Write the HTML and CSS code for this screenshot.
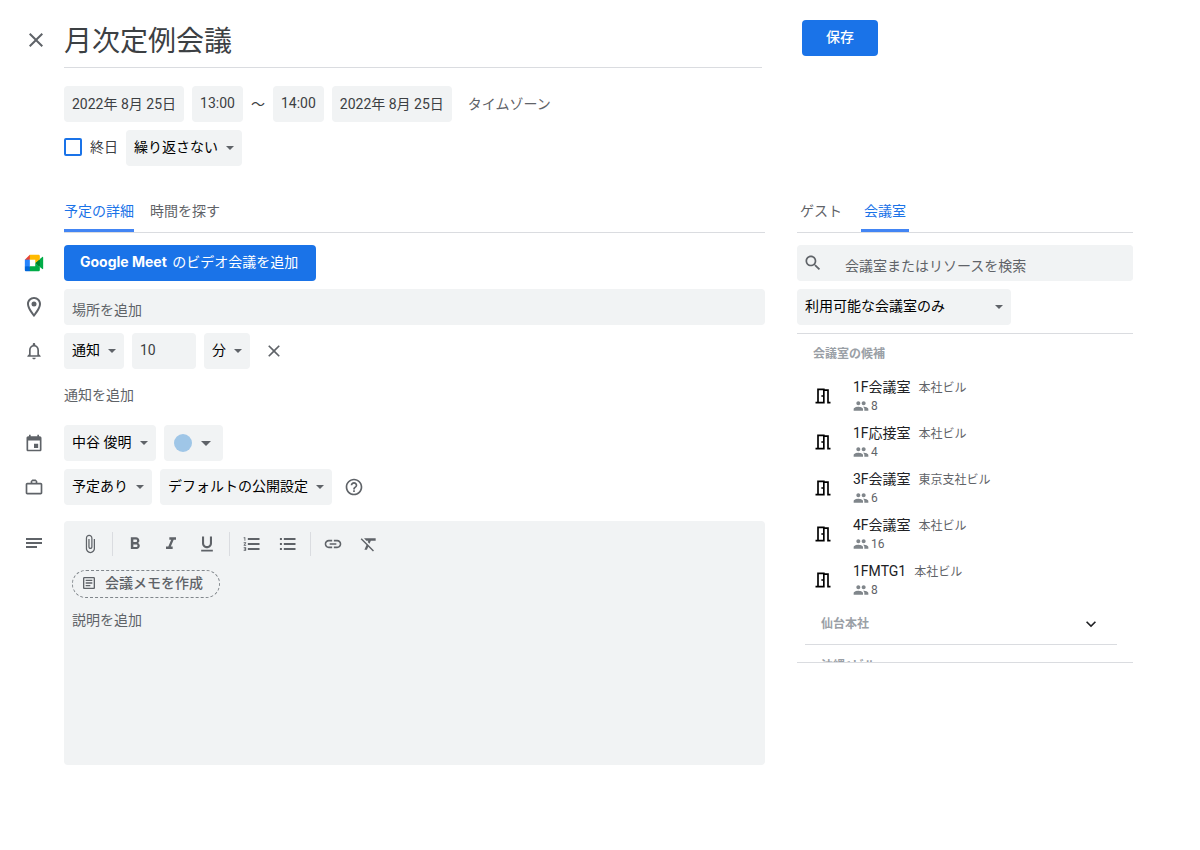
FILE: index.html
```html
<!DOCTYPE html>
<html lang="ja">
<head>
<meta charset="utf-8">
<meta name="viewport" content="width=device-width, initial-scale=1">
<title>月次定例会議</title>
<link rel="stylesheet" href="styles.css">
</head>
<body>
<svg class="sprite" aria-hidden="true">
  <symbol id="close" viewBox="0 0 24 24"><path d="M19 6.41 17.59 5 12 10.59 6.41 5 5 6.41 10.59 12 5 17.59 6.41 19 12 13.41 17.59 19 19 17.59 13.41 12z"/></symbol>
  <symbol id="door" viewBox="0 0 24 24"><path d="M14 6v15H3v-2h2V3h9v1h5v15h2v2h-4V6h-3zm-2-1H7v14h5V5zm-2 6h2v2h-2v-2z"/></symbol>
  <symbol id="people" viewBox="0 0 24 24"><path d="M16 11c1.66 0 2.99-1.34 2.99-3S17.66 5 16 5s-3 1.34-3 3 1.34 3 3 3zm-8 0c1.66 0 2.99-1.34 2.99-3S9.66 5 8 5 5 6.34 5 8s1.34 3 3 3zm0 2c-2.33 0-7 1.17-7 3.5V19h14v-2.500c0-2.330-4.670-3.500-7-3.500zm8 0c-.29 0-.62.02-.97.05 1.160.84 1.970 1.970 1.970 3.450V19h6v-2.500c0-2.330-4.670-3.500-7-3.500z"/></symbol>
</svg>
<form class="page">
  <header class="title-row">
    <button class="icon-button gutter" type="button" aria-label="閉じる"><svg class="icon"><use href="#close"/></svg></button>
    <input class="title" type="text" value="月次定例会議" aria-label="タイトル">
  </header>
  <div class="save-area"><button class="primary save" type="submit">保存</button></div>

  <section class="schedule">
    <div class="line">
      <input class="field fit" type="text" value="2022年 8月 25日" size="11" aria-label="開始日">
      <input class="field fit" type="text" value="13:00" size="4" aria-label="開始時刻">
      <span class="dash">～</span>
      <input class="field fit" type="text" value="14:00" size="4" aria-label="終了時刻">
      <input class="field fit" type="text" value="2022年 8月 25日" size="11" aria-label="終了日">
      <button class="text-button zone" type="button">タイムゾーン</button>
    </div>
    <div class="line">
      <label class="all-day"><input class="check" type="checkbox"> 終日</label>
      <span class="drop"><select class="field" aria-label="繰り返し"><option>繰り返さない</option></select></span>
    </div>
  </section>

  <main class="details">
    <div class="tabs" role="tablist">
      <button class="tab selected" type="button" role="tab" aria-selected="true">予定の詳細</button>
      <button class="tab" type="button" role="tab" aria-selected="false">時間を探す</button>
    </div>
    <div class="row">
      <span class="gutter"><svg class="icon" viewBox="0 0 24 24"><path fill="#00832d" d="M13.500 12 15.900 14.700 19 16.700 19.600 12 19 7.400 15.800 9.100z"/><path fill="#0066da" d="M1 16v4.400C1 21.300 1.700 22 2.600 22H7l.9-3L7 16l-3-.9z"/><path fill="#e94235" d="M7 2 1 8l3 .9L7 8l.9-3z"/><path fill="#2684fc" d="M1 8h6v8H1z"/><path fill="#00ac47" d="M22 4.800 19 7.300v9.400l3 2.500c.5.400 1 .1 1-.5V5.300c0-.6-.6-.9-1-.5zM13.500 12v4H7v6h10.400c.9 0 1.600-.7 1.600-1.600v-3.700z"/><path fill="#ffba00" d="M17.400 2H7v6h6.500v4L19 7.400V3.600C19 2.700 18.300 2 17.400 2z"/></svg></span>
      <button class="primary meet" type="button"><span class="brand">Google Meet</span> のビデオ会議を追加</button>
    </div>
    <div class="row">
      <span class="gutter"><svg class="icon large" viewBox="0 0 24 24"><path d="M12 2C8.130 2 5 5.130 5 9c0 5.250 7 13 7 13s7-7.750 7-13c0-3.870-3.130-7-7-7zM7 9c0-2.760 2.240-5 5-5s5 2.240 5 5c0 2.880-2.880 7.190-5 9.880C9.920 16.210 7 11.850 7 9z"/><circle cx="12" cy="9" r="2.500"/></svg></span>
      <input class="field grow lowered" type="text" placeholder="場所を追加" aria-label="場所">
    </div>
    <div class="row">
      <span class="gutter"><svg class="icon" viewBox="0 0 24 24"><path d="M12 22c1.100 0 2-.9 2-2h-4c0 1.100.9 2 2 2zm6-6v-5c0-3.070-1.630-5.640-4.500-6.320V4c0-.83-.67-1.500-1.500-1.500s-1.500.67-1.500 1.500v.68C7.640 5.360 6 7.920 6 11v5l-2 2v1h16v-1l-2-2zm-2 1H8v-6c0-2.480 1.510-4.500 4-4.500s4 2.020 4 4.500v6z"/></svg></span>
      <span class="drop"><select class="field" aria-label="通知方法"><option>通知</option></select></span>
      <input class="field amount" type="text" inputmode="numeric" value="10" aria-label="通知の時間">
      <span class="drop"><select class="field" aria-label="通知の単位"><option>分</option></select></span>
      <button class="icon-button remove" type="button" aria-label="通知を削除"><svg class="icon"><use href="#close"/></svg></button>
    </div>
    <div class="row">
      <span class="gutter"></span>
      <button class="text-button" type="button">通知を追加</button>
    </div>
    <div class="row calendar">
      <span class="gutter"><svg class="icon" viewBox="0 0 24 24"><path d="M19 4h-1V2h-2v2H8V2H6v2H5c-1.110 0-2 .9-2 2v14c0 1.100.89 2 2 2h14c1.100 0 2-.9 2-2V6c0-1.100-.9-2-2-2zm0 16H5V9h14v11zm-7-7h5v5h-5z"/></svg></span>
      <span class="drop"><select class="field" aria-label="カレンダー"><option>中谷 俊明</option></select></span>
      <button class="field color" type="button" aria-label="予定の色"><span class="dot"></span><span class="caret"></span></button>
    </div>
    <div class="row">
      <span class="gutter"><svg class="icon" viewBox="0 0 24 24"><path d="M20 7h-4V5l-2-2h-4L8 5v2H4c-1.100 0-2 .9-2 2v10c0 1.100.9 2 2 2h16c1.100 0 2-.9 2-2V9c0-1.100-.9-2-2-2zM10 5h4v2h-4V5zm10 14H4V9h16v10z"/></svg></span>
      <span class="drop"><select class="field" aria-label="予定の状態"><option>予定あり</option></select></span>
      <span class="drop"><select class="field" aria-label="公開設定"><option>デフォルトの公開設定</option></select></span>
      <button class="icon-button help" type="button" aria-label="ヘルプ"><svg class="icon" viewBox="0 0 24 24"><path d="M11 18h2v-2h-2v2zm1-16C6.480 2 2 6.480 2 12s4.480 10 10 10 10-4.480 10-10S17.520 2 12 2zm0 18c-4.410 0-8-3.590-8-8s3.590-8 8-8 8 3.590 8 8-3.590 8-8 8zm0-14c-2.210 0-4 1.790-4 4h2c0-1.100.9-2 2-2s2 .9 2 2c0 2-3 1.750-3 5h2c0-2.250 3-2.500 3-5 0-2.210-1.790-4-4-4z"/></svg></button>
    </div>
    <div class="row spaced top">
      <span class="gutter"><svg class="icon" viewBox="0 0 20 20"><path d="M2 5h16v2H2zM2 9h16v2H2zM2 13h11v2H2z"/></svg></span>
      <div class="editor">
        <div class="toolbar">
          <button class="tool" type="button" aria-label="添付"><svg class="icon" viewBox="0 0 24 24"><path d="M16.500 6v11.500c0 2.210-1.790 4-4 4s-4-1.790-4-4V5c0-1.380 1.120-2.500 2.500-2.500s2.500 1.120 2.500 2.500v10.500c0 .55-.45 1-1 1s-1-.45-1-1V6H10v9.500c0 1.380 1.120 2.500 2.500 2.500s2.500-1.120 2.500-2.500V5c0-2.210-1.790-4-4-4S7 2.790 7 5v12.500c0 3.040 2.460 5.500 5.500 5.500s5.500-2.460 5.500-5.500V6h-1.500z"/></svg></button>
          <span class="rule"></span>
          <button class="tool" type="button" aria-label="太字"><svg class="icon" viewBox="0 0 24 24"><path d="M15.600 10.790c.97-.67 1.650-1.770 1.650-2.790 0-2.260-1.750-4-4-4H7v14h7.040c2.090 0 3.710-1.700 3.710-3.790 0-1.520-.86-2.820-2.150-3.420zM10 6.500h3c.83 0 1.500.67 1.500 1.500s-.67 1.500-1.500 1.500h-3v-3zm3.500 9H10v-3h3.500c.83 0 1.500.67 1.500 1.500s-.67 1.500-1.500 1.500z"/></svg></button>
          <button class="tool" type="button" aria-label="斜体"><svg class="icon" viewBox="0 0 24 24"><path d="M10 4v3h2.210l-3.420 8H6v3h8v-3h-2.210l3.420-8H18V4z"/></svg></button>
          <button class="tool" type="button" aria-label="下線"><svg class="icon" viewBox="0 0 24 24"><path d="M12 17c3.310 0 6-2.690 6-6V3h-2.500v8c0 1.930-1.570 3.500-3.500 3.500S8.500 12.930 8.500 11V3H6v8c0 3.310 2.690 6 6 6zm-7 2v2h14v-2H5z"/></svg></button>
          <span class="rule"></span>
          <button class="tool" type="button" aria-label="番号付きリスト"><svg class="icon" viewBox="0 0 24 24"><path d="M2 17h2v.5H3v1h1v.5H2v1h3v-4H2v1zm1-9h1V4H2v1h1v3zm-1 3h1.800L2 13.100v.9h3v-1H3.200L5 10.900V10H2v1zM7 4.800h14v2.400H7zM7 10.800h14v2.400H7zM7 16.800h14v2.400H7z"/></svg></button>
          <button class="tool" type="button" aria-label="箇条書き"><svg class="icon" viewBox="0 0 24 24"><path d="M7 4.800h14v2.400H7zM7 10.800h14v2.400H7zM7 16.800h14v2.400H7zM2.300 4.800h2.400v2.400H2.300zM2.300 10.800h2.400v2.400H2.300zM2.300 16.800h2.400v2.400H2.300z"/></svg></button>
          <span class="rule"></span>
          <button class="tool" type="button" aria-label="リンク"><svg class="icon" viewBox="0 0 24 24"><path d="M3.900 12c0-1.710 1.390-3.100 3.100-3.100h4V7H7c-2.760 0-5 2.240-5 5s2.240 5 5 5h4v-1.900H7c-1.710 0-3.100-1.390-3.100-3.100zM8 13h8v-2H8v2zm9-6h-4v1.900h4c1.710 0 3.100 1.390 3.100 3.100s-1.390 3.100-3.100 3.100h-4V17h4c2.760 0 5-2.240 5-5s-2.240-5-5-5z"/></svg></button>
          <button class="tool" type="button" aria-label="書式をクリア"><svg class="icon" viewBox="0 0 24 24"><path d="M3.270 5 2 6.270l6.970 6.970L6.500 19h3l1.570-3.660L16.730 21 18 19.730 3.550 5.270 3.270 5zM6 5v.18L8.820 8h2.400l-.72 1.680 2.100 2.100L14.210 8H20V5H6z"/></svg></button>
        </div>
        <button class="memo" type="button"><svg class="icon small" viewBox="0 0 24 24"><path d="M19 5v14H5V5h14m0-2H5c-1.100 0-2 .9-2 2v14c0 1.100.9 2 2 2h14c1.100 0 2-.9 2-2V5c0-1.100-.9-2-2-2zM7 7h10v2H7zM7 11h10v2H7zM7 15h7v2H7z"/></svg>会議メモを作成</button>
        <textarea class="description" placeholder="説明を追加" aria-label="説明"></textarea>
      </div>
    </div>
  </main>

  <aside class="rooms">
    <div class="tabs" role="tablist">
      <button class="tab wide" type="button" role="tab" aria-selected="false">ゲスト</button>
      <button class="tab wide selected" type="button" role="tab" aria-selected="true">会議室</button>
    </div>
    <label class="search"><svg class="icon" viewBox="0 0 24 24"><path d="M15.500 14h-.79l-.28-.27C15.410 12.590 16 11.110 16 9.500 16 5.910 13.090 3 9.500 3S3 5.910 3 9.500 5.910 16 9.500 16c1.610 0 3.090-.59 4.230-1.570l.27.28v.79l5 4.990L20.490 19l-4.990-5zm-6 0C7.010 14 5 11.990 5 9.500S7.010 5 9.500 5 14 7.010 14 9.500 11.990 14 9.500 14z"/></svg><input class="field grow lowered" type="search" placeholder="会議室またはリソースを検索" aria-label="会議室またはリソースを検索"></label>
    <span class="drop filter"><select class="field" aria-label="会議室の絞り込み"><option>利用可能な会議室のみ</option></select></span>
    <div class="results">
      <h2 class="caption">会議室の候補</h2>
      <ul class="room-list">
        <li class="room"><svg class="icon"><use href="#door"/></svg><div class="room-text"><div class="room-name">1F会議室<span class="place">本社ビル</span></div><div class="seats"><svg class="icon small"><use href="#people"/></svg>8</div></div></li>
        <li class="room"><svg class="icon"><use href="#door"/></svg><div class="room-text"><div class="room-name">1F応接室<span class="place">本社ビル</span></div><div class="seats"><svg class="icon small"><use href="#people"/></svg>4</div></div></li>
        <li class="room"><svg class="icon"><use href="#door"/></svg><div class="room-text"><div class="room-name">3F会議室<span class="place">東京支社ビル</span></div><div class="seats"><svg class="icon small"><use href="#people"/></svg>6</div></div></li>
        <li class="room"><svg class="icon"><use href="#door"/></svg><div class="room-text"><div class="room-name">4F会議室<span class="place">本社ビル</span></div><div class="seats"><svg class="icon small"><use href="#people"/></svg>16</div></div></li>
        <li class="room"><svg class="icon"><use href="#door"/></svg><div class="room-text"><div class="room-name">1FMTG1<span class="place">本社ビル</span></div><div class="seats"><svg class="icon small"><use href="#people"/></svg>8</div></div></li>
      </ul>
      <button class="building" type="button">仙台本社<svg class="icon" viewBox="0 0 24 24"><path d="M7.410 8.590 12 13.170l4.590-4.580L18 10l-6 6-6-6z"/></svg></button>
      <button class="building" type="button">沖縄1ビル</button>
    </div>
  </aside>
</form>
</body>
</html>
```

FILE: styles.css
```css
* { box-sizing: border-box; }

body {
  margin: 0;
  background: #fff;
  color: #3c4043;
  font: 14px/20px Roboto, "Noto Sans CJK JP", sans-serif;
}

button, input, select, textarea {
  margin: 0;
  padding: 0;
  border: 0;
  background: none;
  color: inherit;
  font: inherit;
}

button { cursor: pointer; }
.sprite { display: none; }

.icon {
  display: block;
  flex: none;
  width: 20px;
  height: 20px;
  fill: #5f6368;
}
.icon.large { width: 24px; height: 24px; }
.icon.small { width: 16px; height: 16px; }

.page {
  display: grid;
  grid-template-columns: minmax(0, 1fr) 336px;
  column-gap: 32px;
  padding: 12px 67px 24px 0;
}

.gutter {
  display: flex;
  flex: none;
  align-items: center;
  justify-content: center;
  width: 64px;
  padding-left: 4px;
}

.title-row { display: flex; height: 56px; padding-right: 3px; }
.title-row .gutter { padding-left: 8px; }
.title {
  flex: 1;
  min-width: 0;
  padding-top: 4px;
  border-bottom: 1px solid #dadce0;
  font-size: 28px;
  line-height: 36px;
}
.title-row .icon { width: 24px; height: 24px; }

.save-area { padding: 8px 5px; }

.primary {
  height: 36px;
  border-radius: 4px;
  background: #1a73e8;
  color: #fff;
}
.save { padding: 0 24px 2px; font-weight: 500; }
.meet { padding: 0 18px 2px 16px; }
.brand { margin-right: 2px; font-family: Inter, sans-serif; font-weight: 700; }

.schedule {
  display: flex;
  grid-column: 1 / -1;
  flex-direction: column;
  gap: 8px;
  padding: 18px 0 24px 64px;
}
.line { display: flex; align-items: center; gap: 8px; }
.dash { width: 14px; }

.field {
  height: 36px;
  padding: 0 8px 2px;
  border-radius: 4px;
  background: #f1f3f4;
}
.fit { field-sizing: content; }
.grow { flex: 1; min-width: 0; }
.amount { width: 64px; }
.lowered { padding: 5px 8px 0; }
::placeholder { color: #5f6368; opacity: 1; }

.drop { position: relative; display: inline-flex; }
.drop select {
  width: 100%;
  padding-right: 24px;
  appearance: none;
  color: #000;
}
.drop::after, .caret {
  border: 4px solid transparent;
  border-top-color: #5f6368;
  border-bottom: 0;
  content: "";
}
.drop::after {
  position: absolute;
  top: 16px;
  right: 8px;
  pointer-events: none;
}

.text-button { height: 36px; color: #5f6368; }
.zone { padding: 0 8px; }

.all-day { display: flex; align-items: center; gap: 8px; padding-bottom: 2px; }
.check {
  appearance: none;
  width: 18px;
  height: 18px;
  border: 2px solid #1a73e8;
  border-radius: 2px;
}

.tabs {
  display: flex;
  gap: 16px;
  height: 43px;
  margin-bottom: 4px;
  border-bottom: 1px solid #dadce0;
}
.details .tabs { margin-left: 64px; }
.tab {
  padding-top: 2px;
  border-bottom: 3px solid transparent;
  color: #5f6368;
}
.tab.wide { width: 48px; }
.tab.selected { border-bottom-color: #4285f4; color: #1a73e8; }

.details { display: flex; flex-direction: column; gap: 8px; }
.row { display: flex; gap: 8px; }
.row .gutter { margin-right: -8px; }
.calendar { margin-top: 4px; }
.spaced { margin-top: 8px; }
.top .gutter { height: 44px; }

.icon-button { display: flex; align-items: center; justify-content: center; }
.remove { width: 32px; }
.help { width: 28px; }

.color { display: flex; align-items: center; gap: 9px; padding: 0 12px 0 10px; }
.dot { width: 18px; height: 18px; border-radius: 50%; background: #9fc6e7; }
.caret { border-width: 5px 5px 0; }

.editor {
  display: flex;
  flex: 1;
  flex-direction: column;
  align-items: flex-start;
  min-width: 0;
  min-height: 244px;
  padding: 7px 8px 8px;
  border-radius: 4px;
  background: #f1f3f4;
}
.toolbar { display: flex; align-items: center; height: 32px; }
.tool { display: flex; align-items: center; justify-content: center; width: 36px; height: 32px; }
.rule { width: 1px; height: 24px; margin: 0 4px; background: #dadce0; }
.memo {
  display: flex;
  align-items: center;
  gap: 8px;
  height: 28px;
  margin-top: 10px;
  padding: 0 16px 2px 8px;
  border: 1px dashed #80868b;
  border-radius: 14px;
  color: #5f6368;
  font-weight: 500;
}
.description { flex: 1; width: 100%; margin-top: 12px; resize: none; }

.rooms { display: flex; flex-direction: column; gap: 8px; }
.search {
  display: flex;
  align-items: center;
  padding-left: 6px;
  border-radius: 4px;
  background: #f1f3f4;
}
.search .field { padding-left: 22px; }
.filter { width: 214px; }

.results {
  height: 330px;
  overflow: hidden;
  border: solid #dadce0;
  border-width: 1px 0;
}
.caption {
  margin: 0;
  padding: 10px 16px 9px;
}
.caption, .building { color: #9aa0a6; font-size: 12px; font-weight: 700; }
.room-list { margin: 0; padding: 0; list-style: none; }
.room { display: flex; align-items: center; gap: 20px; height: 46px; padding: 0 16px; }
.room > .icon { fill: #000; }
.room-text { padding-bottom: 2px; }
.room-name { color: #202124; }
.place { margin-left: 8px; color: #5f6368; font-size: 12px; }
.seats { display: flex; align-items: center; gap: 2px; color: #5f6368; font-size: 12px; line-height: 16px; }
.seats .icon { fill: #80868b; }

.building {
  display: flex;
  align-items: center;
  justify-content: space-between;
  width: 312px;
  height: 42px;
  margin-left: 8px;
  padding: 0 16px;
  border-bottom: 1px solid #dadce0;
}
.building .icon { fill: #202124; }
```
